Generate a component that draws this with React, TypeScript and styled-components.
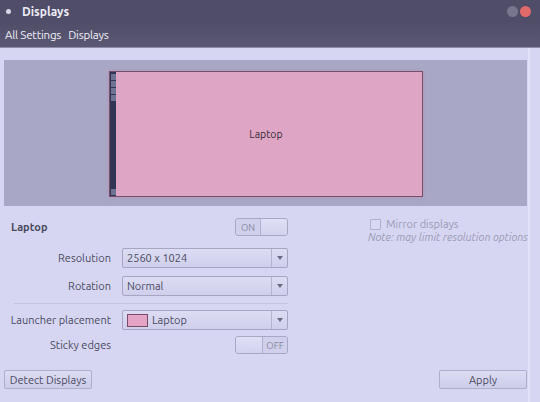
import React from 'react';
import styled, { createGlobalStyle } from 'styled-components';

const GlobalStyle = createGlobalStyle`
  html, body {
    margin: 0;
    padding: 0;
    background: #d6d6f2;
  }
  body {
    font-family: Ubuntu, "Open Sans", "DejaVu Sans", sans-serif;
  }
`;

const Window = styled.div`
  width: 540px;
  height: 402px;
  display: flex;
  flex-direction: column;
  background: #d6d6f2;
  overflow: hidden;
`;

const TitleBar = styled.div`
  height: 22px;
  display: flex;
  align-items: center;
  padding: 0 4px 0 4px;
  background: #4f4d68;
  color: #ececf6;
`;

const AppDot = styled.span`
  width: 5px;
  height: 5px;
  border-radius: 50%;
  background: #d8d8e8;
  margin: 0 11px 0 2px;
`;

const Title = styled.span`
  font-size: 12px;
  font-weight: 700;
  flex: 1;
`;

const WinButton = styled.span<{ $close?: boolean }>`
  width: 11px;
  height: 11px;
  border-radius: 50%;
  margin-left: 2px;
  background: ${p => (p.$close ? '#e06a6a' : '#77768e')};
  margin-right: ${p => (p.$close ? '5px' : '0')};
`;

const Toolbar = styled.div`
  height: 25px;
  display: flex;
  align-items: center;
  gap: 7px;
  padding: 0 5px;
  background: linear-gradient(#4f4d68, #5a5872);
  border-bottom: 1px solid #8e8caa;
  color: #f0f0f8;
  font-size: 11.5px;
  letter-spacing: -0.2px;
`;

const Content = styled.div`
  flex: 1;
  display: flex;
  flex-direction: column;
  padding: 12px 1px 0 4px;
  border-right: 2px solid #e2e2f8;
  margin-right: 10px;
`;

const Stage = styled.div`
  height: 146px;
  background: #a8a8c6;
  display: flex;
  align-items: flex-start;
  padding-top: 11px;
  padding-left: 105px;
  box-sizing: border-box;
`;

const Monitor = styled.div`
  width: 312px;
  height: 124px;
  display: flex;
  border: 1px solid #74506a;
  box-shadow: 0 0 3px rgba(210, 120, 170, 0.6);
  background: #dea6c4;
`;

const Launcher = styled.div`
  width: 6px;
  background: #2f3552;
  display: flex;
  flex-direction: column;
  padding: 2px 0 1px;
  gap: 1px;
`;

const LauncherIcon = styled.div`
  height: 6px;
  margin: 0 0.5px;
  background: #6e7393;
`;

const LauncherGap = styled.div`
  flex: 1;
`;

const MonitorLabel = styled.div`
  flex: 1;
  display: flex;
  align-items: center;
  justify-content: center;
  font-size: 10.5px;
  color: #3a2a38;
  padding-right: 6px;
`;

const Settings = styled.div`
  display: grid;
  grid-template-columns: 284px 1fr;
  margin-top: 9px;
`;

const Form = styled.div`
  display: flex;
  flex-direction: column;
`;

const Row = styled.div<{ $h?: number; $mb?: number }>`
  display: grid;
  grid-template-columns: 107px 166px;
  column-gap: 11px;
  align-items: center;
  height: ${p => p.$h ?? 28}px;
  margin-bottom: ${p => p.$mb ?? 0}px;
`;

const Label = styled.div<{ $bold?: boolean }>`
  font-size: 11px;
  color: #4a4a5e;
  text-align: ${p => (p.$bold ? 'left' : 'right')};
  font-weight: ${p => (p.$bold ? 700 : 400)};
  padding-left: ${p => (p.$bold ? '7px' : '0')};
`;

const Combo = styled.div`
  height: 20px;
  display: flex;
  align-items: center;
  border: 1px solid #a6a6c4;
  border-radius: 2px;
  background: linear-gradient(#dcdcf4, #cfcfec);
  box-sizing: border-box;
  font-size: 11px;
  color: #4a4a5e;
  padding-left: 4px;
`;

const ComboText = styled.span`
  flex: 1;
  display: flex;
  align-items: center;
  gap: 4px;
`;

const Arrow = styled.span`
  width: 15px;
  height: 100%;
  border-left: 1px solid #b4b4d0;
  display: flex;
  align-items: center;
  justify-content: center;
  &:after {
    content: '';
    border-left: 3px solid transparent;
    border-right: 3px solid transparent;
    border-top: 4px solid #6a6a80;
  }
`;

const Swatch = styled.span`
  width: 19px;
  height: 11px;
  background: #e4a4c6;
  border: 1px solid #7b4a68;
`;

const SwitchWrap = styled.div`
  justify-self: end;
  width: 53px;
  height: 18px;
  display: flex;
  border: 1px solid #a8a8c4;
  border-radius: 3px;
  box-sizing: border-box;
  overflow: hidden;
  background: #cfcfeb;
`;

const SwitchText = styled.span`
  flex: 1;
  display: flex;
  align-items: center;
  justify-content: center;
  font-size: 9.5px;
  color: #8a8aa0;
  background: #d0d0ec;
`;

const Knob = styled.span`
  width: 26px;
  background: linear-gradient(#dfdff6, #d2d2ee);
  border-left: 1px solid #b0b0cc;
  border-right: 1px solid #b0b0cc;
  &:first-child { border-left: none; }
  &:last-child { border-right: none; }
`;

const Separator = styled.div`
  height: 1px;
  background: #c3c3e0;
  margin: 3px 0 3px 10px;
  width: 274px;
`;

const Side = styled.div`
  padding: 3px 0 0 82px;
  display: flex;
  flex-direction: column;
  gap: 1px;
`;

const Check = styled.label`
  display: flex;
  align-items: center;
  gap: 5px;
  font-size: 11px;
  color: #9a9ab2;
`;

const Box = styled.span`
  width: 9px;
  height: 9px;
  border: 1px solid #b0b0c8;
  border-radius: 1px;
  background: #d8d8f2;
`;

const Note = styled.div`
  font-size: 10.8px;
  font-style: italic;
  color: #9a9ab2;
  white-space: nowrap;
  margin-left: -2px;
`;

const Footer = styled.div`
  display: flex;
  justify-content: space-between;
  align-items: center;
  margin-top: 13px;
`;

const Button = styled.button<{ $w: number }>`
  width: ${p => p.$w}px;
  height: 19px;
  padding: 0;
  border: 1px solid #aeaeca;
  border-radius: 2px;
  background: linear-gradient(#dcdcf4, #cdcdea);
  font-family: inherit;
  font-size: 11px;
  color: #4a4a5e;
`;

const switchRow = (on: boolean) =>
  on ? (
    <SwitchWrap>
      <SwitchText>ON</SwitchText>
      <Knob />
    </SwitchWrap>
  ) : (
    <SwitchWrap>
      <Knob />
      <SwitchText>OFF</SwitchText>
    </SwitchWrap>
  );

const App: React.FC = () => (
  <Window>
    <GlobalStyle />
    <TitleBar>
      <AppDot />
      <Title>Displays</Title>
      <WinButton />
      <WinButton $close />
    </TitleBar>
    <Toolbar>
      <span>All Settings</span>
      <span>Displays</span>
    </Toolbar>
    <Content>
      <Stage>
        <Monitor>
          <Launcher>
            <LauncherIcon />
            <LauncherIcon />
            <LauncherIcon />
            <LauncherIcon />
            <LauncherGap />
            <LauncherIcon />
          </Launcher>
          <MonitorLabel>Laptop</MonitorLabel>
        </Monitor>
      </Stage>
      <Settings>
        <Form>
          <Row $h={24} $mb={5}>
            <Label $bold>Laptop</Label>
            {switchRow(true)}
          </Row>
          <Row>
            <Label>Resolution</Label>
            <Combo>
              <ComboText>2560 x 1024</ComboText>
              <Arrow />
            </Combo>
          </Row>
          <Row>
            <Label>Rotation</Label>
            <Combo>
              <ComboText>Normal</ComboText>
              <Arrow />
            </Combo>
          </Row>
          <Separator />
          <Row $h={26}>
            <Label>Launcher placement</Label>
            <Combo>
              <ComboText>
                <Swatch />
                Laptop
              </ComboText>
              <Arrow />
            </Combo>
          </Row>
          <Row $h={24}>
            <Label>Sticky edges</Label>
            {switchRow(false)}
          </Row>
        </Form>
        <Side>
          <Check>
            <Box />
            Mirror displays
          </Check>
          <Note>Note: may limit resolution options</Note>
        </Side>
      </Settings>
      <Footer>
        <Button $w={88}>Detect Displays</Button>
        <Button $w={88}>Apply</Button>
      </Footer>
    </Content>
  </Window>
);

export default App;
